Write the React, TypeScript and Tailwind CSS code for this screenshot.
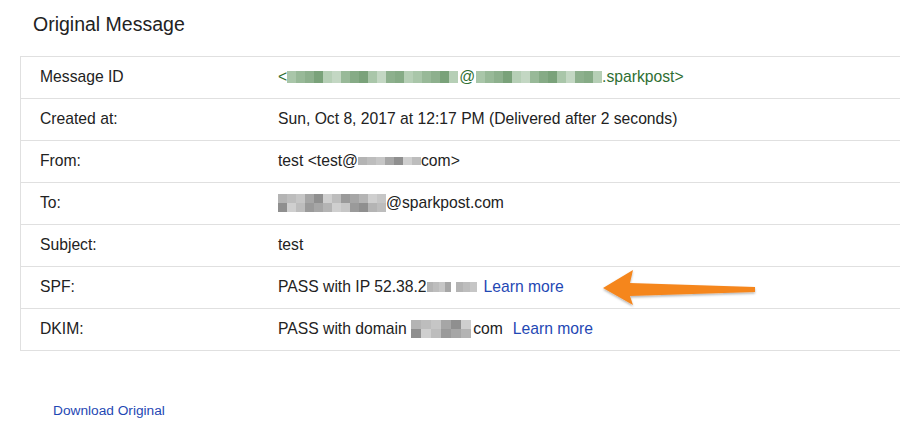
import React from 'react';

const font = { fontFamily: '"Liberation Sans", Arial, sans-serif' };

const greens = ['bg-[#a9c6a9]', 'bg-[#86ab86]', 'bg-[#c3d7c3]', 'bg-[#7aa27a]', 'bg-[#98b998]', 'bg-[#b6cfb6]', 'bg-[#8db08d]'];
const grays = ['bg-[#b4b4b4]', 'bg-[#9a9a9a]', 'bg-[#cfcfcf]', 'bg-[#a6a6a6]', 'bg-[#bdbdbd]', 'bg-[#8f8f8f]', 'bg-[#c6c6c6]'];

// pixelated redaction block
function Blur({ cells, rows = 1, tone = 'gray', cell = 'w-[9px]', h = 'h-[12px]' }: { cells: number; rows?: number; tone?: 'gray' | 'green'; cell?: string; h?: string }) {
  const palette = tone === 'green' ? greens : grays;
  return (
    <span className="inline-flex flex-col align-middle">
      {Array.from({ length: rows }).map((_, r) => (
        <span key={r} className="flex">
          {Array.from({ length: cells }).map((_, i) => (
            <span key={i} className={`${cell} ${h} ${palette[(i * 3 + r * 5 + (i % 2)) % palette.length]}`} />
          ))}
        </span>
      ))}
    </span>
  );
}

const Link = ({ children }: { children: React.ReactNode }) => (
  <span className="text-[#1f48b4]">{children}</span>
);

const rows: { label: string; value: React.ReactNode }[] = [
  {
    label: 'Message ID',
    value: (
      <span className="flex items-center text-[#2f6f33]">
        &lt;<Blur cells={19} tone="green" />
        <span className="px-[1px]">@</span>
        <Blur cells={14} tone="green" />
        .sparkpost&gt;
      </span>
    ),
  },
  { label: 'Created at:', value: 'Sun, Oct 8, 2017 at 12:17 PM (Delivered after 2 seconds)' },
  {
    label: 'From:',
    value: (
      <span className="flex items-center">
        test &lt;test@<Blur cells={7} h="h-[8px]" />com&gt;
      </span>
    ),
  },
  {
    label: 'To:',
    value: (
      <span className="flex items-center">
        <Blur cells={12} rows={2} h="h-[9px]" />@sparkpost.com
      </span>
    ),
  },
  { label: 'Subject:', value: 'test' },
  {
    label: 'SPF:',
    value: (
      <span className="flex items-center">
        PASS with IP 52.38.2
        <span className="flex items-center gap-[5px]">
          <Blur cells={4} cell="w-[6px]" h="h-[10px]" />
          <Blur cells={3} cell="w-[7px]" h="h-[10px]" />
        </span>
        <span className="ml-[7px]">
          <Link>Learn more</Link>
        </span>
      </span>
    ),
  },
  {
    label: 'DKIM:',
    value: (
      <span className="flex items-center">
        PASS with domain&nbsp;<Blur cells={6} rows={2} cell="w-[10px]" h="h-[9px]" />
        <span className="pl-[2px]">com</span>
        <span className="ml-[10px]">
          <Link>Learn more</Link>
        </span>
      </span>
    ),
  },
];

export default function App() {
  return (
    <div className="relative w-[900px] h-[428px] overflow-hidden bg-white text-[#222]" style={font}>
      <h1 className="pl-[33px] pt-[12px] h-[56px] text-[19.5px] leading-[24px] text-[#222]">Original Message</h1>

      <div className="ml-[20px] w-[900px] border-l border-t border-[#e0e0e0]">
        {rows.map((row) => (
          <div key={row.label} className="flex items-center h-[42px] pb-[1px] border-b border-[#e0e0e0] text-[15.7px]">
            <div className="w-[257px] pl-[19px] shrink-0">{row.label}</div>
            <div className="flex items-center">{row.value}</div>
          </div>
        ))}
      </div>

      <div className="pl-[53px] pt-[50px] text-[13.7px] text-[#1f48b4]">Download Original</div>

      {/* orange callout arrow */}
      <svg className="absolute left-[596px] top-[264px] w-[166px] h-[48px]" viewBox="0 0 166 48">
        <defs>
          <filter id="sh" x="-10%" y="-20%" width="120%" height="150%">
            <feDropShadow dx="0" dy="1.5" stdDeviation="1.2" floodColor="#000" floodOpacity="0.3" />
          </filter>
        </defs>
        <polygon
          filter="url(#sh)"
          fill="#f5861f"
          points="7,24 37,6 34,19 159,23 159,28 34,32 37,41"
        />
      </svg>
    </div>
  );
}
